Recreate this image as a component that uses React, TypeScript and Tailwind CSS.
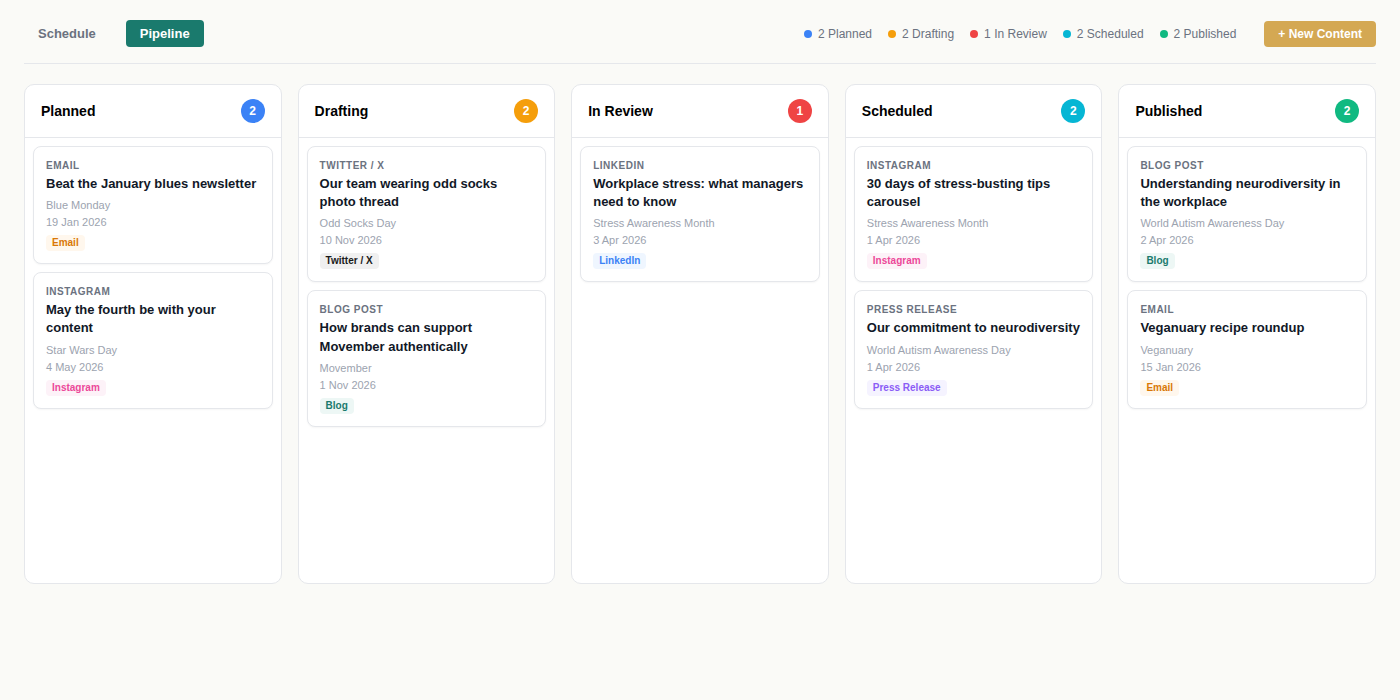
const tagStyles: Record<string, string> = {
  Email: "bg-[#fff7ed] text-[#d97706]",
  Instagram: "bg-[#fdf2f8] text-[#ec4899]",
  "Twitter / X": "bg-[#f0f0f0] text-[#1a1a1a]",
  Blog: "bg-[#edf7f5] text-[#1a7a6d]",
  LinkedIn: "bg-[#eff6ff] text-[#3b82f6]",
  "Press Release": "bg-[#f5f3ff] text-[#8b5cf6]",
};

type Card = { cat: string; title: string; sub: string; date: string; tag: string };
type Col = { name: string; dot: string; cards: Card[] };

const cols: Col[] = [
  {
    name: "Planned",
    dot: "bg-[#3b82f6]",
    cards: [
      { cat: "Email", title: "Beat the January blues newsletter", sub: "Blue Monday", date: "19 Jan 2026", tag: "Email" },
      { cat: "Instagram", title: "May the fourth be with your content", sub: "Star Wars Day", date: "4 May 2026", tag: "Instagram" },
    ],
  },
  {
    name: "Drafting",
    dot: "bg-[#f59e0b]",
    cards: [
      { cat: "Twitter / X", title: "Our team wearing odd socks photo thread", sub: "Odd Socks Day", date: "10 Nov 2026", tag: "Twitter / X" },
      { cat: "Blog Post", title: "How brands can support Movember authentically", sub: "Movember", date: "1 Nov 2026", tag: "Blog" },
    ],
  },
  {
    name: "In Review",
    dot: "bg-[#ef4444]",
    cards: [
      { cat: "LinkedIn", title: "Workplace stress: what managers need to know", sub: "Stress Awareness Month", date: "3 Apr 2026", tag: "LinkedIn" },
    ],
  },
  {
    name: "Scheduled",
    dot: "bg-[#06b6d4]",
    cards: [
      { cat: "Instagram", title: "30 days of stress-busting tips carousel", sub: "Stress Awareness Month", date: "1 Apr 2026", tag: "Instagram" },
      { cat: "Press Release", title: "Our commitment to neurodiversity", sub: "World Autism Awareness Day", date: "1 Apr 2026", tag: "Press Release" },
    ],
  },
  {
    name: "Published",
    dot: "bg-[#10b981]",
    cards: [
      { cat: "Blog Post", title: "Understanding neurodiversity in the workplace", sub: "World Autism Awareness Day", date: "2 Apr 2026", tag: "Blog" },
      { cat: "Email", title: "Veganuary recipe roundup", sub: "Veganuary", date: "15 Jan 2026", tag: "Email" },
    ],
  },
];

function ContentCard({ card }: { card: Card }) {
  return (
    <div className="rounded-lg border border-[#e5e7eb] bg-white p-3 shadow-[0_1px_2px_rgba(0,0,0,0.04)]">
      <div className="text-[10px] leading-[14px] font-semibold uppercase tracking-[0.5px] text-[#6b7280]">{card.cat}</div>
      <div className="mt-[2px] text-[13px] leading-[18.2px] font-semibold text-[#111827]">{card.title}</div>
      <div className="mt-[4px] text-[11px] leading-[17px] text-[#9ca3af]">{card.sub}</div>
      <div className="text-[11px] leading-[17px] text-[#9ca3af]">{card.date}</div>
      <div className="mt-[4px] flex">
        <span className={`rounded px-[6px] py-[2px] text-[10px] leading-[12px] font-semibold ${tagStyles[card.tag]}`}>{card.tag}</span>
      </div>
    </div>
  );
}

export default function App() {
  return (
    <div className="min-h-[700px] bg-[#fafaf7] p-6 pt-5 font-['Liberation_Sans',Arial,sans-serif]">
      <div className="flex items-center justify-between border-b border-[#e5e7eb] pb-4">
        <div className="flex items-center gap-4">
          <button className="rounded px-[14px] py-[6px] text-[13px] leading-[15px] font-semibold text-[#6b7280]">Schedule</button>
          <button className="rounded bg-[#1a7a6d] px-[14px] py-[6px] text-[13px] leading-[15px] font-semibold text-white">Pipeline</button>
        </div>
        <div className="flex items-center gap-7">
          <div className="flex items-center gap-4">
            {cols.map((c) => (
              <div key={c.name} className="flex items-center gap-[6px] text-xs leading-4 text-[#6b7280]">
                <span className={`h-2 w-2 rounded-full ${c.dot}`} />
                {c.cards.length} {c.name}
              </div>
            ))}
          </div>
          <button className="rounded bg-[#d4a853] px-[14px] py-[6px] text-xs leading-[14px] font-semibold text-white">+ New Content</button>
        </div>
      </div>
      <div className="mt-5 grid h-[500px] grid-cols-5 gap-4">
        {cols.map((c) => (
          <div key={c.name} className="flex min-w-0 flex-col rounded-[10px] border border-[#e5e7eb] bg-white">
            <div className="flex h-[53px] items-center justify-between border-b border-[#e5e7eb] px-4">
              <span className="text-sm font-semibold text-black">{c.name}</span>
              <span className={`flex h-6 w-6 items-center justify-center rounded-full text-xs font-semibold text-white ${c.dot}`}>{c.cards.length}</span>
            </div>
            <div className="flex flex-col gap-2 p-2">
              {c.cards.map((card) => (
                <ContentCard key={card.title} card={card} />
              ))}
            </div>
          </div>
        ))}
      </div>
    </div>
  );
}
